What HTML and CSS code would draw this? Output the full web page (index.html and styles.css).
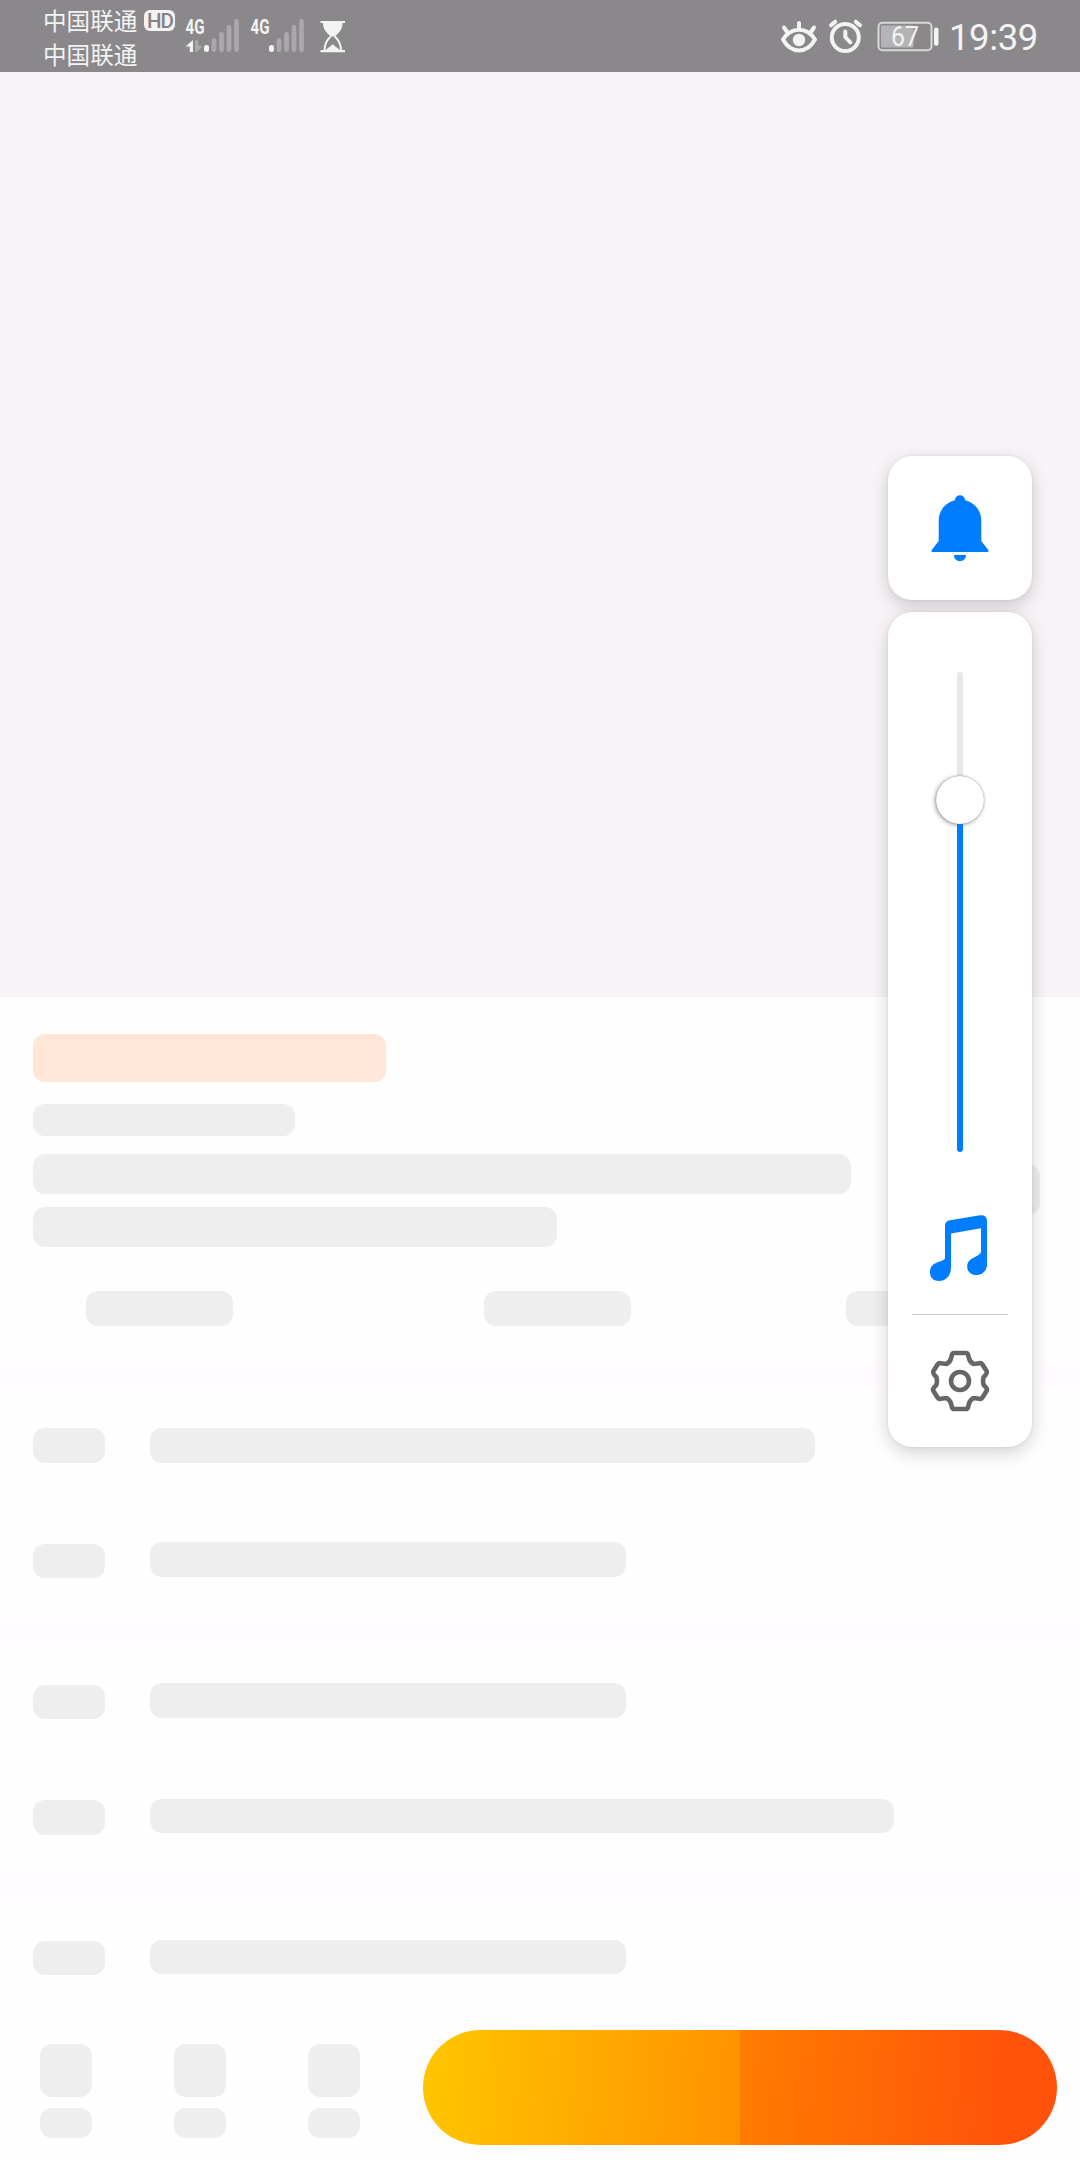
FILE: index.html
```html
<!DOCTYPE html>
<html lang="zh-CN">
<head>
<meta charset="utf-8">
<title>商品详情</title>
<link rel="stylesheet" href="styles.css">
</head>
<body>
<div class="screen">
  <header class="status">
    <div class="carriers">
      <div class="carrier"><span>中国联通</span><span class="hd">HD</span></div>
      <div class="carrier"><span>中国联通</span></div>
    </div>
    <svg class="signal" width="56" height="72" viewBox="185 0 56 72">
      <text class="net" x="185.500" y="34" textLength="19" lengthAdjust="spacingAndGlyphs">4G</text>
      <path class="lit" d="M193 40v12h-3.200v-5.500h-4.300z"/>
      <path class="dim" d="M195 52V41.500q0-1.500 1.600-1.500t1.600 1.500V45l4.300 1.500-5.500 5.500z"/>
      <rect class="lit" x="204" y="45" width="5" height="7" rx="2.300"/>
      <path class="bars" d="M214 40.700v9M221.500 34.300v15.400M229 27.300v22.400M236.500 21.300v28.400"/>
    </svg>
    <svg class="signal second" width="56" height="72" viewBox="250 0 56 72">
      <text class="net" x="250.500" y="34" textLength="19" lengthAdjust="spacingAndGlyphs">4G</text>
      <rect class="lit" x="269" y="45" width="5" height="7" rx="2.300"/>
      <path class="bars" d="M279 40.700v9M286.500 34.300v15.400M294 27.300v22.400M301.500 21.300v28.400"/>
    </svg>
    <svg class="hourglass" width="26" height="72" viewBox="320 0 26 72">
      <path class="lit" d="M320.500 21h24.500v2h-2.500c0 7-4 10-7.700 13.500h-4C327 33 323 30 323 23h-2.500zM320.500 50h24.500v2.200h-24.500z"/>
      <path class="wire" d="M331 36.300c-4 3.500-6.500 7-6.500 14M334.500 36.300c4 3.500 6.500 7 6.500 14"/>
      <path class="lit" d="M326 50.500c.5-2.500 4.500-3.500 6.800-6.500 2.300 3 6.200 4 6.700 6.500z"/>
    </svg>
    <div class="status-right">
      <svg class="eye" width="38" height="72" viewBox="780 0 38 72">
        <path class="thick" d="M783 39.500c8-13 24-13 32 0-8 14.500-24 14.500-32 0zM799 23v6M784 27.500l3.500 5M814 27.500l-3.500 5"/>
        <circle class="lit" cx="799" cy="40" r="6.200"/>
      </svg>
      <svg class="alarm" width="36" height="72" viewBox="828 0 36 72">
        <circle class="thick" cx="845.300" cy="37.500" r="13.500"/>
        <path class="thick" d="M845.300 31.500V37l5 5.300M831 25.300l4.200-3.600M860 25.300l-4.200-3.600"/>
      </svg>
      <svg class="battery" width="62" height="72" viewBox="877 0 62 72">
        <rect class="frame" x="878.500" y="22.800" width="53" height="27.500" rx="4"/>
        <rect class="charge" x="881" y="25.500" width="32.500" height="22" rx="1.500"/>
        <rect class="lit" x="934" y="27.500" width="4.500" height="18.300" rx="2"/>
        <text class="level" x="905" y="46" text-anchor="middle" textLength="28" lengthAdjust="spacingAndGlyphs">67</text>
      </svg>
      <time class="clock">19:39</time>
    </div>
  </header>

  <div class="hero"></div>

  <section class="summary">
    <div class="bone price"></div>
    <div class="bone subtitle"></div>
    <div class="title-row">
      <div class="title-lines">
        <div class="bone title-long"></div>
        <div class="bone title-short"></div>
      </div>
      <div class="bone share"></div>
    </div>
    <div class="facts">
      <div class="bone fact"></div>
      <div class="bone fact"></div>
      <div class="bone fact"></div>
    </div>
  </section>

  <section class="group">
    <div class="row level"><div class="bone label"></div><div class="bone value wide"></div></div>
    <div class="row"><div class="bone label"></div><div class="bone value"></div></div>
  </section>
  <section class="group middle">
    <div class="row"><div class="bone label"></div><div class="bone value"></div></div>
    <div class="row"><div class="bone label"></div><div class="bone value widest"></div></div>
  </section>
  <section class="group">
    <div class="row"><div class="bone label"></div><div class="bone value"></div></div>
  </section>

  <footer class="actions">
    <div class="tools">
      <div class="tool"><div class="bone icon"></div><div class="bone caption"></div></div>
      <div class="tool"><div class="bone icon"></div><div class="bone caption"></div></div>
      <div class="tool"><div class="bone icon"></div><div class="bone caption"></div></div>
    </div>
    <div class="buy"><div class="cart"></div><div class="order"></div></div>
  </footer>

  <aside class="volume">
    <div class="card ringer">
      <svg width="60" height="68" viewBox="930 494 60 68">
        <path class="blue" d="M954.800 500.300C955.500 493.500 964.500 493.500 965.200 500.300C975 502.700 981.300 511 981.300 520.500V541L988.300 550Q989.400 552 987 552H933Q930.600 552 931.700 550L938.700 541V520.500C938.700 511 945 502.700 954.800 500.300zM954 555H966C966 563 954 563 954 555z"/>
      </svg>
    </div>
    <div class="card slider">
      <div class="track"><div class="rest"></div><div class="thumb"></div><div class="filled"></div></div>
      <svg class="music" width="60" height="68" viewBox="929 1214 60 68">
        <path class="blue" d="M945 1226Q945 1221 950 1220.300L980 1215.200Q987 1214.500 987 1221V1264.500C987 1270.500 982.500 1275 976.500 1275C971 1275 967.200 1271.500 967.200 1267C967.200 1257 977.500 1258.500 981 1252V1228.300L951 1233.600V1267.500C951 1275.500 946 1281 939 1281C933.500 1281 930 1277.500 930 1272.500C930 1261 941.500 1263 945 1258.500z"/>
      </svg>
      <div class="divider"></div>
      <svg class="gear" width="60" height="62" viewBox="930 1350 60 62">
        <path d="M954 1353H966Q967.500 1353 968 1354.500L969 1358.500Q970 1362 973.500 1364L979.500 1363.300Q981.500 1362.700 982.500 1364.500L986.800 1371.500Q987.300 1373 986 1374.500L983.500 1377.300Q982.500 1381 983.500 1384.700L986 1387.500Q987.300 1389 986.800 1390.500L982.500 1397.500Q981.500 1399.300 979.500 1398.700L973.500 1398Q970 1400 969 1403.500L968 1407.500Q967.500 1409 966 1409H954Q952.500 1409 952 1407.500L951 1403.500Q950 1400 946.500 1398L940.500 1398.700Q938.500 1399.300 937.500 1397.500L933.200 1390.500Q932.700 1389 934 1387.500L936.500 1384.700Q937.500 1381 936.500 1377.300L934 1374.500Q932.700 1373 933.200 1371.500L937.500 1364.500Q938.500 1362.700 940.500 1363.300L946.500 1364Q950 1362 951 1358.500L952 1354.500Q952.500 1353 954 1353z"/>
        <circle cx="960" cy="1381" r="9"/>
      </svg>
    </div>
  </aside>
</div>
</body>
</html>
```

FILE: styles.css
```css
* { box-sizing: border-box; }
body { margin: 0; background: #fefefe; }
svg { display: block; flex: none; }

.screen {
  position: relative;
  width: 1080px;
  height: 2160px;
  display: flex;
  flex-direction: column;
  overflow: hidden;
  background: #fefefe;
}

/* Status bar */
.status {
  flex: none;
  height: 72px;
  padding: 0 43px;
  display: flex;
  background: #8b888b;
  color: #f3f3f3;
}
.carriers { width: 142px; padding-top: 3px; }
.carrier {
  height: 34px;
  display: flex;
  align-items: center;
  gap: 7px;
  white-space: nowrap;
  font: 23.6px/34px "Noto Sans CJK SC", sans-serif;
}
.hd {
  flex: none;
  width: 31px;
  height: 21px;
  border-radius: 6px;
  background: #f3f3f3;
  color: #858285;
  font: 500 20.5px/22px Roboto, sans-serif;
  letter-spacing: -1px;
  text-align: center;
}
.second { margin-left: 9px; }
.hourglass { margin-left: 14px; }
.lit { fill: #f3f3f3; }
.dim { fill: #aaa8aa; }
.net { fill: #f3f3f3; font: bold 20.5px Roboto, sans-serif; }
.bars { stroke: #aaa8aa; stroke-width: 4.7; stroke-linecap: round; }
.wire { fill: none; stroke: #f3f3f3; stroke-width: 2; }
.thick { fill: none; stroke: #f3f3f3; stroke-width: 4; stroke-linecap: round; stroke-linejoin: round; }
.status-right { margin-left: auto; display: flex; }
.alarm { margin-left: 10px; }
.battery { margin-left: 13px; }
.frame { fill: none; stroke: #d9d8d9; stroke-width: 2; }
.charge { fill: #b5b3b5; }
text.level { fill: #f3f3f3; font: 27px Roboto, sans-serif; }
.clock { width: 88px; margin-left: 10px; font: 36.5px/75px Roboto, sans-serif; letter-spacing: -.4px; white-space: nowrap; }

/* Placeholder blocks */
.hero { flex: none; height: 925px; background: #f7f3f7; }
.bone { flex: none; border-radius: 12px; background: #eee; }
.summary { flex: none; height: 364px; padding: 37.400px 33px 0; }
.price { width: 353px; height: 48px; background: #ffe6d6; }
.subtitle { width: 262px; height: 32px; margin-top: 21.500px; }
.title-row { display: flex; justify-content: space-between; margin: 18.500px 7px 0 0; }
.title-lines { display: flex; flex-direction: column; gap: 13.500px; }
.title-long { width: 818px; height: 39.500px; }
.title-short { width: 524px; height: 39.500px; }
.share { width: 52px; height: 51px; margin-top: 10px; }
.facts { display: grid; grid-template-columns: 398px 362px 147px; margin: 44.500px 0 0 53.400px; }
.fact { width: 147px; height: 34.500px; }

.group {
  flex: none;
  display: flex;
  flex-direction: column;
  gap: 79.500px;
  padding: 40.400px 33px;
  border-top: 27px solid #fffbff;
}
.group.middle { padding-top: 39px; padding-bottom: 39px; gap: 81px; }
.row { height: 34.500px; display: flex; gap: 45px; }
.label { width: 72px; height: 34.500px; margin-top: 1.300px; }
.row.level .label { margin-top: 0; }
.value { width: 476px; height: 34.500px; }
.wide { width: 665px; }
.widest { width: 744px; }

/* Bottom action bar */
.actions {
  flex: none;
  height: 130px;
  margin-top: auto;
  padding: 0 23px 0 40px;
  display: flex;
  justify-content: space-between;
}
.tools { display: flex; gap: 82px; padding-top: 14.400px; }
.tool { width: 52px; display: flex; flex-direction: column; gap: 11px; }
.icon { height: 52.300px; }
.caption { height: 30.300px; }
.buy { width: 634px; height: 115px; margin-top: .4px; display: flex; overflow: hidden; border-radius: 58px; }
.cart, .order { flex: 1; }
.cart { background: linear-gradient(95deg, #ffc600, #ff9100); }
.order { background: linear-gradient(95deg, #ff7d00, #ff520a 85%); }

/* Floating volume panel */
.volume {
  position: absolute;
  top: 456px;
  right: 48px;
  width: 144px;
  display: flex;
  flex-direction: column;
  gap: 12px;
}
.card { border-radius: 24px; background: #fff; box-shadow: 0 6px 18px rgba(0, 0, 0, .17), 0 0 3px rgba(0, 0, 0, .1); }
.ringer { height: 144px; padding: 38px 42px; }
.blue { fill: #007dff; }
.slider { height: 835px; padding-top: 60px; display: flex; flex-direction: column; align-items: center; }
.track { height: 480px; display: flex; flex-direction: column; align-items: center; }
.rest { width: 6px; height: 104px; border-radius: 3px 3px 0 0; background: #e8e8e8; }
.thumb { width: 48px; height: 48px; border-radius: 50%; background: #fff; box-shadow: -1px 1px 4px rgba(0, 0, 0, .4), 0 0 1px rgba(0, 0, 0, .5); }
.filled { width: 6px; height: 328px; border-radius: 0 0 3px 3px; background: #007dff; }
.music { margin: 62px 2px 0 0; }
.divider { width: 96px; height: 1px; margin-top: 32px; background: #c8c8c8; }
.gear { margin-top: 35px; fill: none; stroke: #666; stroke-width: 4.600; stroke-linejoin: round; }
```
